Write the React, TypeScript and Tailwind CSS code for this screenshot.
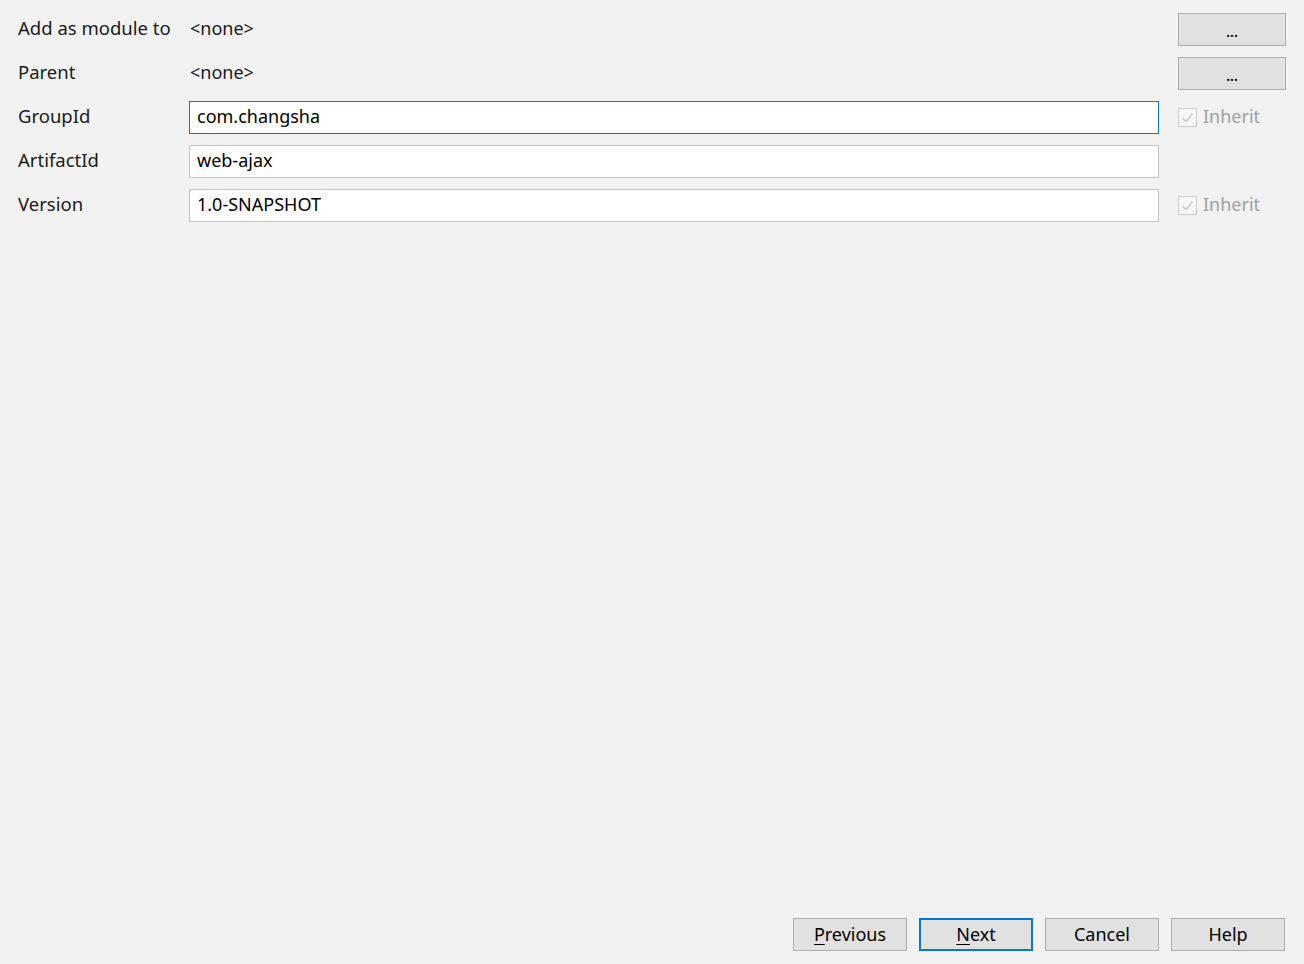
import React from 'react'

const font = { fontFamily: '"Noto Sans", "Microsoft YaHei", sans-serif' }

function Check() {
  return (
    <label className="mb-[2px] ml-[19px] flex items-center gap-[6px] text-[#a0a0a0]">
      <span className="mt-[2px] flex h-[19px] w-[19px] items-center justify-center border border-[#cccccc] bg-[#f7f7f7]">
        <svg width="13" height="13" viewBox="0 0 13 13" fill="none">
          <path d="M1.5 7 L5 10.5 L11.5 2.5" stroke="#c4c4c4" strokeWidth="1.2" />
        </svg>
      </span>
      Inherit
    </label>
  )
}

function Field({ value, focused }: { value: string; focused?: boolean }) {
  return (
    <div
      className={
        focused
          ? 'flex h-[33px] items-center border border-[#0078d7] bg-white px-[7px] pb-[2px] text-black'
          : 'flex h-[33px] items-center border border-[#c4c4c4] bg-white px-[7px] pb-[2px] text-black'
      }
    >
      {value}
    </div>
  )
}

function DotsButton() {
  return (
    <button className="ml-[19px] flex h-[33px] w-[108px] items-end justify-center border border-[#adadad] bg-[#e1e1e1] pb-[6px] text-[14px] font-semibold leading-none text-black">
      ...
    </button>
  )
}

function FooterButton({ label, mnemonic, primary }: { label: string; mnemonic?: boolean; primary?: boolean }) {
  return (
    <button
      className={
        primary
          ? 'h-[33px] w-[114px] border-2 border-[#0078d7] bg-[#e1e1e1] text-black'
          : 'h-[33px] w-[114px] border border-[#adadad] bg-[#e1e1e1] text-black'
      }
    >
      {mnemonic ? (
        <>
          <span className="underline underline-offset-[3px]">{label[0]}</span>
          {label.slice(1)}
        </>
      ) : (
        label
      )}
    </button>
  )
}

export default function App() {
  return (
    <div
      className="flex h-[964px] w-[1304px] flex-col bg-[#f2f2f2] text-[18px] text-[#1a1a1a]"
      style={font}
    >
      <div className="grid grid-cols-[171px_970px_126px] items-center gap-y-[11px] pl-[18px] pt-[13px]">
        <div className="mb-[3px] text-[18.5px]">Add as module to</div>
        <div className="mb-[2px] pl-px">&lt;none&gt;</div>
        <DotsButton />

        <div className="mb-[3px] text-[18.5px]">Parent</div>
        <div className="mb-[2px] pl-px">&lt;none&gt;</div>
        <DotsButton />

        <div className="mb-[3px] text-[18.5px]">GroupId</div>
        <Field value="com.changsha" focused />
        <Check />

        <div className="mb-[3px] text-[18.5px]">ArtifactId</div>
        <Field value="web-ajax" />
        <div />

        <div className="mb-[3px] text-[18.5px]">Version</div>
        <Field value="1.0-SNAPSHOT" />
        <Check />
      </div>

      <div className="mt-auto flex justify-end gap-[12px] pb-[13px] pr-[19px]">
        <FooterButton label="Previous" mnemonic />
        <FooterButton label="Next" mnemonic primary />
        <FooterButton label="Cancel" />
        <FooterButton label="Help" />
      </div>
    </div>
  )
}
